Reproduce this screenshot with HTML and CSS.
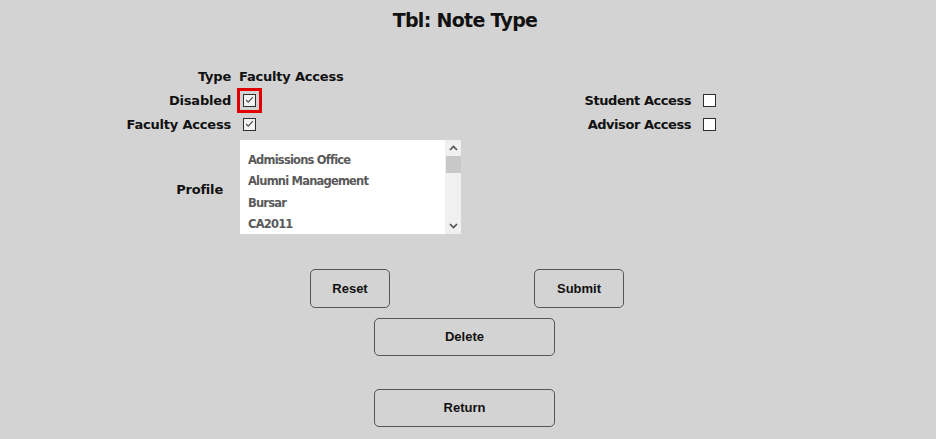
FILE: index.html
```html
<!DOCTYPE html>
<html lang="en">
<head>
<meta charset="utf-8">
<title>Tbl: Note Type</title>
<link rel="stylesheet" href="styles.css">
</head>
<body>
<div class="page">
  <h1 class="title">Tbl: Note Type</h1>
  <form class="form">
    <div class="lbl">Type</div>
    <div class="val">Faculty Access</div>
    <div class="lbl2"></div>
    <div class="val2"></div>

    <div class="lbl">Disabled</div>
    <div class="val"><span class="cb checked focus"><svg viewBox="0 0 13 13" width="12" height="12"><path d="M2.5 6.5 L5 9 L10.5 3" fill="none" stroke="#4a4a4a" stroke-width="1.3"/></svg></span></div>
    <div class="lbl2">Student Access</div>
    <div class="val2"><span class="cb"></span></div>

    <div class="lbl">Faculty Access</div>
    <div class="val"><span class="cb checked"><svg viewBox="0 0 13 13" width="12" height="12"><path d="M2.5 6.5 L5 9 L10.5 3" fill="none" stroke="#4a4a4a" stroke-width="1.3"/></svg></span></div>
    <div class="lbl2">Advisor Access</div>
    <div class="val2"><span class="cb"></span></div>

    <div class="lbl profile-lbl">Profile</div>
    <div class="val">
      <div class="listbox">
        <ul class="options">
          <li>Admissions Office</li>
          <li>Alumni Management</li>
          <li>Bursar</li>
          <li>CA2011</li>
        </ul>
        <div class="scrollbar">
          <svg class="arrow" viewBox="0 0 9 6" width="9" height="6"><path d="M1 5 L4.5 1.5 L8 5" fill="none" stroke="#505050" stroke-width="1.6"/></svg>
          <div class="thumb"></div>
          <div class="track"></div>
          <svg class="arrow" viewBox="0 0 9 6" width="9" height="6"><path d="M1 1 L4.5 4.5 L8 1" fill="none" stroke="#505050" stroke-width="1.6"/></svg>
        </div>
      </div>
    </div>
  </form>
  <div class="btn-row">
    <button type="button" class="btn btn-reset">Reset</button>
    <button type="button" class="btn btn-submit">Submit</button>
  </div>
  <div class="btn-col">
    <button type="button" class="btn btn-wide">Delete</button>
    <button type="button" class="btn btn-wide btn-return">Return</button>
  </div>
</div>
</body>
</html>
```

FILE: styles.css
```css
html, body {
  margin: 0;
  padding: 0;
  background: #d3d3d3;
}
body {
  font-family: "DejaVu Sans", Verdana, sans-serif;
  color: #111;
}
.page {
  width: 936px;
  height: 439px;
  overflow: hidden;
}
.title {
  margin: 0;
  width: 930px;
  text-align: center;
  font-size: 19px;
  font-weight: bold;
  letter-spacing: -0.7px;
  line-height: 40px;
  height: 40px;
  color: #111;
}
.form {
  display: grid;
  grid-template-columns: 231px 300px 144px 40px;
  grid-template-rows: 24px 24px 24px 98px;
  column-gap: 8px;
  margin-top: 24px;
  font-size: 13px;
  font-weight: bold;
  letter-spacing: -0.2px;
}
.lbl, .lbl2 {
  text-align: right;
  display: flex;
  align-items: center;
  justify-content: flex-end;
  white-space: nowrap;
}
.lbl2 {
  letter-spacing: -0.45px;
}
.val, .val2 {
  display: flex;
  align-items: center;
  white-space: nowrap;
}
.profile-lbl {
  padding-right: 8px;
  padding-top: 8px;
}
.cb {
  box-sizing: border-box;
  width: 13px;
  height: 13px;
  margin-left: 4px;
  border: 1px solid #2e2e2e;
  background: #fff;
  display: flex;
  align-items: center;
  justify-content: center;
}
.cb.checked {
  background: #f2f2f2;
}
.cb.focus {
  outline: 3px solid #e00000;
  outline-offset: 3px;
}
.listbox {
  margin-top: 4px;
  margin-left: 1px;
  width: 221px;
  height: 94px;
  background: #fff;
  display: flex;
}
.options {
  list-style: none;
  margin: 0;
  padding: 10px 0 0 8px;
  flex: 1;
  color: #5a5a5a;
  font-size: 11.5px;
  letter-spacing: -0.8px;
}
.options li {
  height: 21.4px;
  line-height: 21.4px;
}
.scrollbar {
  width: 16px;
  background: #f0f0f0;
  display: flex;
  flex-direction: column;
  align-items: center;
}
.arrow {
  margin: 5px 0 5px;
  flex: none;
}
.thumb {
  width: 15px;
  height: 17px;
  background: #c8c8c8;
  flex: none;
}
.track {
  flex: 1;
}
.btn {
  box-sizing: border-box;
  background: #d3d3d3;
  border: 1px solid #555;
  border-radius: 5px;
  font-family: "Liberation Sans", Arial, sans-serif;
  font-weight: bold;
  font-size: 13px;
  color: #111;
  padding: 0 0 1px;
  height: 39px;
}
.btn-row {
  display: flex;
  margin-top: 35px;
  padding-left: 310px;
}
.btn-reset {
  width: 80px;
}
.btn-submit {
  width: 90px;
  margin-left: 144px;
}
.btn-col {
  display: flex;
  flex-direction: column;
  padding-left: 374px;
  margin-top: 10px;
}
.btn-wide {
  width: 181px;
  height: 38px;
}
.btn-return {
  margin-top: 33px;
}
```
